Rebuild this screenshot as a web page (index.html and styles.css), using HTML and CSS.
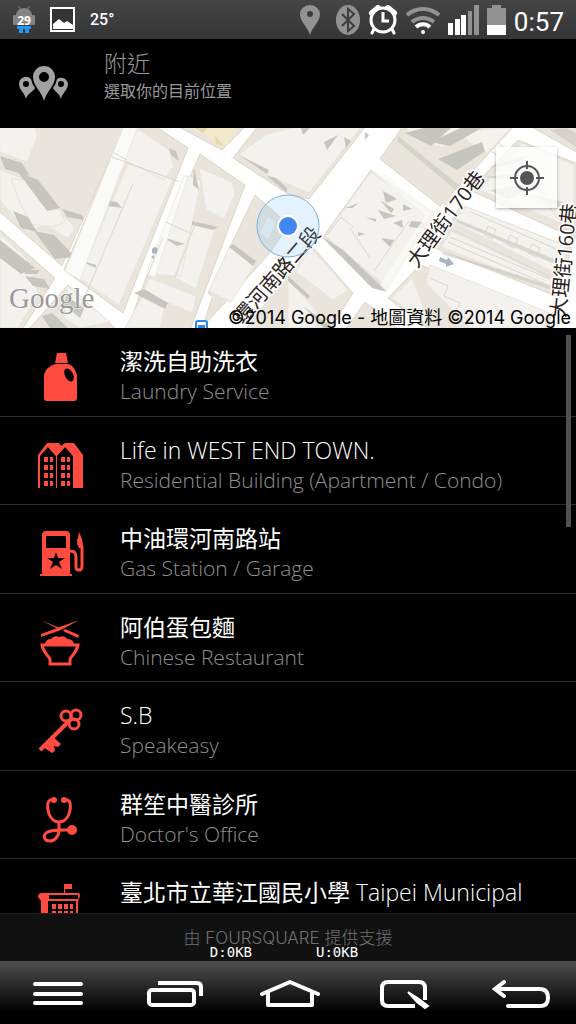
FILE: index.html
```html
<!DOCTYPE html>
<html lang="zh-TW">

<head>
    <meta charset="UTF-8">
    <meta name="viewport" content="width=device-width, initial-scale=1.0">
    <title>附近</title>
    <link rel="stylesheet" href="styles.css">
</head>

<body>
    <!-- 狀態列 -->
    <div class="status-bar">
        <div class="status-left">
            <svg width="24" height="28" viewBox="0 0 24 28">
                <path d="M4 9a8 7 0 0 1 16 0v10H4z" fill="#858585" />
                <path d="M6 0l3 4M18 0l-3 4" stroke="#858585" />
                <rect x="1" y="9" width="3" height="10" rx="1" fill="#858585" />
                <rect x="20" y="9" width="3" height="10" rx="1" fill="#858585" />
                <path d="M5 20h14v3h-2v4h-4v-4h-2v4H7v-4H5z" fill="#2196f3" />
                <text x="12" y="19" class="badge-text">29</text>
            </svg>
            <svg width="26" height="26" viewBox="0 0 26 26">
                <rect x="1" y="1" width="23" height="23" fill="#333" stroke="#fff" stroke-width="2" />
                <path d="M3 22v-5l6-5 5 4 3-2 6 4v4z" fill="#fff" />
            </svg>
            <span class="temperature">25°</span>
        </div>
        <div class="status-right">
            <svg width="20" height="32" viewBox="0 0 20 32">
                <path d="M10 31C8 23 0 18 0 10a10 9 0 0 1 20 0c0 8-8 13-10 21z" fill="#929292" />
                <circle cx="10" cy="10" r="3" fill="#3c3c3c" />
            </svg>
            <svg width="24" height="32" viewBox="0 0 24 32">
                <ellipse cx="12" cy="16" rx="12" ry="15" fill="#929292" />
                <path d="M6 10l12 12-6 5V5l6 5L6 22" fill="none" stroke="#3c3c3c" stroke-width="2" />
            </svg>
            <svg width="30" height="30" viewBox="0 0 30 30">
                <path d="M4 8l6-5M26 8l-6-5" stroke="#fff" stroke-width="6" stroke-linecap="round" />
                <path d="M6 24l-2 4M24 24l2 4" stroke="#fff" stroke-width="3" stroke-linecap="round" />
                <circle cx="15" cy="15" r="12" fill="#3c3c3c" stroke="#fff" stroke-width="3" />
                <path d="M15 7v9h6" fill="none" stroke="#fff" stroke-width="3" />
            </svg>
            <svg width="34" height="28" viewBox="0 0 34 28" fill="none" stroke-width="4">
                <path d="M1 9a24 24 0 0 1 32 0" stroke="#929292" />
                <path d="M6 16a17 17 0 0 1 22 0" stroke="#929292" />
                <path d="M10 21a10 10 0 0 1 14 0" stroke="#fff" />
                <circle cx="17" cy="26" r="2" fill="#fff" />
            </svg>
            <svg width="31" height="30" viewBox="0 0 31 30">
                <path d="M0 18h5v12H0zM7 14h5v16H7zM13 10h5v20h-5z" fill="#fff" />
                <path d="M20 6h4v24h-4zM26 0h5v30h-5z" fill="#929292" />
            </svg>
            <svg width="19" height="30" viewBox="0 0 19 30">
                <path d="M5 0h9v3h5v18H0V3h5z" fill="#929292" />
                <path d="M0 20h19v10H0z" fill="#fff" />
            </svg>
            <span class="clock">0:57</span>
        </div>
    </div>

    <!-- 標題 -->
    <header class="header">
        <svg class="header-icon" width="50" height="36" viewBox="0 0 50 36" fill="#a2a2a2" fill-rule="evenodd">
            <path d="M26 35C24 26 15 20 15 11a11 11 0 0 1 22 0c0 9-9 15-11 24zM26 6a5 5 0 0 0 0 10 5 5 0 0 0 0-10z" />
            <path d="M8 33C7 27 1 24 1 18a7 7 0 0 1 12-5q1 5 4 9c-1 3-8 6-9 11zM8 15a3 3 0 0 0 0 6 3 3 0 0 0 0-6z" />
            <path d="M43 33c1-6 7-9 7-15a7 7 0 0 0-11-5q-1 5-4 9c1 3 7 6 8 11zM43 15a3 3 0 0 0 0 6 3 3 0 0 0 0-6z" />
        </svg>
        <div>
            <h1 class="header-title">附近</h1>
            <p class="header-subtitle">選取你的目前位置</p>
        </div>
    </header>

    <!-- 地圖 -->
    <div class="map">
        <svg class="map-canvas" viewBox="0 0 576 200" preserveAspectRatio="xMidYMid slice">
            <rect width="576" height="200" fill="#fff" />
            <!-- 街區 -->
            <g fill="#e9e5dc" stroke="#ddd6c8">
                <path d="M-2-2H125L62 138 0 84zM-2 100L55 150 22 202H-2z" />
                <path d="M124-2H155L188 20 123 185 64 142zM68 157L117 202H28z" />
                <path d="M200 26L245 57 190 202H127L147 147z" />
                <path d="M255 67L289 97 268 127 223 177 208 165zM212 170l10 8-19 20z" />
                <path d="M177-2H246L222 22zM258-2H366L309 71 288 66 233 30z" />
                <path d="M371 42L434 85 386 162 323 109z" />
                <path d="M403-2H514L460 57 440 78 380 31zM530-2H578V25z" />
                <path d="M518 12L578 36V112L470 62zM461 77L572 120 556 168 435 120z" />
                <path d="M420 137L552 186 548 202H430L388 170z" />
                <path d="M311 117L353 165 330 202H245zM365 174L400 202H345z" />
            </g>
            <!-- 建築 -->
            <g fill="#f3f2ee" stroke="#e8e5df">
                <path d="M-2-2H35L37 10 27 34 0 24zM0 42L20 49 42 83 65 89 75 100 68 110 45 97 28 104 0 72zM0 106L26 130 38 166 18 200H0z" />
                <path d="M11 51l14 1 22 28 13 2 5 12-12 5-21-3-11-19zM68 158l42 36-30 6-16-10z" />
                <path d="M139 2l30 20 5 16-10 14-52-26zM128 36l45 15-54 126-40-27z" />
                <path d="M199 40l33 14 3 12-11 25-18-9zM188 48l13 5-20 95-34-2zM194 94l21 7-19 60-22-12z" />
                <path d="M149 150l47 18-3 17-50-20zM145 164l20 13-5 23h-35zM230 118l25 19-24 37-22-11zM268 88l8 8-8 16-8-8z" />
                <path d="M267 6L302-2H362L309 65 270 48 239 26zM371 44l59 42-43 73-62-51z" />
                <path d="M404-2H470L442 19 415 12zM459 3L511 0 487 25 470 15zM522 15L574 37V100L480 62z" />
                <path d="M467 79L568 119 558 146 453 94zM451 103L556 153 554 162 441 119z" />
                <path d="M430 137L550 185 544 200H470L426 155zM412 150l20 50-40-30zM310 119l38 43-15 10-37-28zM288 152l28 30v18h-28z" />
            </g>
            <!-- 建築陰影 -->
            <g fill="#c7c5bf">
                <path d="M0 28L22 35 30 48 5 41zM18 44L38 52 60 80 47 83zM13 83l15 6 9 15-16-4zM34 103l20 4 21 22-20 2z" />
                <path d="M62 81l20 6 2 5-17-3zM0 112l35 28-14 6L0 130zM25 148l19 3 6 10-17-3zM25 142h15l-3 4H25z" />
                <path d="M42 188l10-3 16 15H50zM66 168l18 12-4 10-16-13zM134 165l10-4 24 14-3 6z" />
                <path d="M99 71l18 3 5 6-20-3zM71 129l25 8v3zM169 20l7 3 3 10-8-6zM192 93l26 6-5 3-21-5zM163 109l22 7-8 2z" />
                <path d="M233 116l23 17-3 5-24-19zM194 40l5 22-6-5zM276 50l11 10v5l-20-17zM239 27l30 15-2 4z" />
                <path d="M301 0h9l-7 7zM324 14l14-7-11 15zM344 9l7 4-5 7zM365 4l4 3-4 5zM405 5L431-2h22l-22 20zM431 14L465-2h20l-35 20zM438 31l44-17 3 9-28 19z" />
                <path d="M345 80l14-5-7 5zM383 63l14 8-11 4zM380 72l14 9-3 4zM403 76l9 5-9 2zM358 104l8 2-8 2zM378 82l18 6-12 3zM393 95l9-3 1 8zM411 93l12 1 3 7-17-2zM381 110l13 2-4 7zM366 89l10 2v3z" />
                <path d="M322 109l20 12 45 43-15-4zM288 148l22 20-2 3-20-18zM303 178l30 22h-9z" />
                <path d="M486 40l42-13-9 8zM484 49l38-4-12 7zM490 62l49-7-31 17zM530 67l34 7-5 5zM550 2l16-2 12 6V20z" opacity=".6" />
                <path d="M443 124l110 34v4l-111-36zM454 90l110 45v5L458 95z" opacity=".6" />
            </g>
            <path d="M124-2H138L80 152 65 143zM188 48l-4 0-38 98 9 3z" fill="#fafaf8" stroke="#eceae4" />
            <path d="M371 42L386 47 434 85 428 95 388 164 380 157 426 87z" fill="#fafaf6" opacity=".8" />
            <path d="M398 24l58 46-9 9-60-45z" fill="#e9e5dc" />
            <path d="M398 8l62 50-4 4-58-48z" fill="#d2d4c8" />
            <g fill="none" stroke="#dad7d0">
                <path d="M112 29l68 25M114 25l13 7M133 56L80 180M196 94L175 150M166 94l26 12M163 109l-16 40" />
                <path d="M453 102l100 48M450 109l100 42M448 114l98 42M471 84l92 40-9 11M488 20l60 50M499 15l71 90M505 58l71 31" />
                <path d="M430 150l18 8-4 10 16 7-5 10 18 9M327 107l14-18 12 10M409 93l-35 50M350 100l20 30M488 98l8 4-4 9-8-4zM510 107l8 4-4 9-8-4zM532 116l8 4-4 9-8-4z" />
            </g>
            <path d="M195 0h42l-4 8-9 12-12-8z" fill="#f2e8ca" />
            <path d="M195 0l8 5 5-5M215 8l9 10-8-2z" fill="#e4d7ab" />
            <path d="M152 121q3-4 6 0l-2 5-4-1zM151 129l3-2v4zM440 129l7 3 1-3 6 7-8 3v-3l-7-3z" fill="#a9b4c2" />
            <rect x="196" y="193" width="11" height="11" rx="2" fill="#fff" stroke="#2b86ea" stroke-width="2" />
            <path d="M198 197h7v4h-7z" fill="#2b86ea" />
            <!-- 路名 -->
            <g class="street">
                <text transform="translate(243 197) rotate(-49)">環河南路二段</text>
                <text transform="translate(417 141) rotate(-53)">大理街170巷</text>
                <text transform="translate(565 190) rotate(-84)">大理街160巷</text>
            </g>
            <!-- 目前位置 -->
            <circle cx="288" cy="98" r="31" fill="#64b5f0" fill-opacity=".18" stroke="#7fb2dc" />
            <circle cx="288" cy="98" r="11" fill="#fff" />
            <circle cx="288" cy="98" r="9" fill="#4285f4" />
            <text x="9" y="180" class="watermark">Google</text>
        </svg>
        <button class="locate" type="button" aria-label="目前位置">
            <svg width="36" height="36" viewBox="0 0 36 36" fill="none" stroke="#555" stroke-width="2">
                <circle cx="18" cy="18" r="12" />
                <path d="M18 1v8M18 27v8M1 18h8M27 18h8" />
                <circle cx="18" cy="18" r="6" fill="#555" />
            </svg>
        </button>
        <div class="copyright">©2014 Google - 地圖資料 ©2014 Google</div>
    </div>

    <!-- 地點列表 -->
    <main class="places">
        <ul class="place-list">
            <li>
                <a class="place" href="#">
                    <svg class="place-icon" viewBox="0 0 48 48">
                        <path d="M19 0h9l2 10H17zM15 12q2-1 4-1h10q3 0 5 2c3 3 5 7 5 11v21q0 3-3 3H9q-3 0-3-3V24c0-6 4-10 9-12z" />
                        <ellipse cx="31" cy="22" rx="4" ry="7" transform="rotate(-28 31 22)" fill="#000" />
                    </svg>
                    <span class="place-text"><span class="place-name"><span class="cjk">潔洗自助洗衣</span></span><span class="place-type">Laundry Service</span></span>
                </a>
            </li>
            <li>
                <a class="place" href="#">
                    <svg class="place-icon" viewBox="1 0 48 48">
                        <path d="M1 46V13L10 1h10l4 3 4-3h9l9 12v33H36V14l-8-9-8 9v32h-1V14L11 5 3 14v32z" />
                        <path d="M10 1h12l3 4h3l-9 9-8-9zM7 15h4v5H7zM13 15h3v5h-3zM7 23h4v5H7zM13 23h3v5h-3zM7 31h4v5H7zM13 31h3v5h-3zM7 39h4v5H7zM13 39h3v5h-3zM24 15h4v5h-4zM30 15h3v5h-3zM24 23h4v5h-4zM30 23h3v5h-3zM24 31h4v5h-4zM30 31h3v5h-3zM24 39h4v5h-4zM30 39h3v5h-3z" />
                    </svg>
                    <span class="place-text"><span class="place-name">Life in WEST END TOWN.</span><span class="place-type">Residential Building (Apartment / Condo)</span></span>
                </a>
            </li>
            <li>
                <a class="place" href="#">
                    <svg class="place-icon" viewBox="0 0 48 48">
                        <path fill-rule="evenodd" d="M4 44V5q0-4 4-4h20q4 0 4 4v39h2v2H2v-2zM8 6v12h20V6zM18 22l-2 6h-7l6 4-3 7 6-4 6 4-3-7 6-4h-7z" />
                        <path d="M32 21c5 0 6 2 6 8v8q0 3 3 3t3-4V17l-4-8" fill="none" stroke="#ff4b40" stroke-width="3" />
                        <path d="M41 2q4 7 4 16h-4l-2-4z" />
                    </svg>
                    <span class="place-text"><span class="place-name"><span class="cjk">中油環河南路站</span></span><span class="place-type">Gas Station / Garage</span></span>
                </a>
            </li>
            <li>
                <a class="place" href="#">
                    <svg class="place-icon" viewBox="0 0 48 48">
                        <path d="M3 15L41 1 23 11 3 18zM3 1l21 9-2 1zM27 10l14 6-1 3-15-7zM7 25q1-5 6-5 3-4 8-2 6-2 8 2 6 0 7 5z" />
                        <path d="M4 26h36c-1 7-5 9-8 14v5H12v-5C9 35 5 33 4 26z" fill="none" stroke="#ff4b40" stroke-width="3" />
                    </svg>
                    <span class="place-text"><span class="place-name"><span class="cjk">阿伯蛋包麵</span></span><span class="place-type">Chinese Restaurant</span></span>
                </a>
            </li>
            <li>
                <a class="place" href="#">
                    <svg class="place-icon" viewBox="0 0 48 48">
                        <g fill="none" stroke="#ff4b40" stroke-width="3">
                            <circle cx="28" cy="9" r="5" />
                            <circle cx="38" cy="8" r="5" />
                            <circle cx="36" cy="17" r="5" />
                            <path d="M31 14L2 43" stroke-width="4" />
                        </g>
                        <path d="M14 29l9 8-3 3-4-1 1 5-3 2-9-6z" />
                    </svg>
                    <span class="place-text"><span class="place-name">S.B</span><span class="place-type">Speakeasy</span></span>
                </a>
            </li>
            <li>
                <a class="place" href="#">
                    <svg class="place-icon" viewBox="0 0 48 48">
                        <g fill="none" stroke="#ff4b40" stroke-width="3" stroke-linecap="round">
                            <path d="M16 4c-8-2-7 8-5 14 2 5 5 8 10 8s8-3 10-8c2-6 3-16-5-14" />
                            <path d="M21 26v8c0 7-5 11-9 11-6 0-7-5-4-8 5-4 16-3 26-3" />
                        </g>
                        <circle cx="16" cy="4" r="3" />
                        <circle cx="26" cy="4" r="3" />
                        <circle cx="34" cy="34" r="5" />
                    </svg>
                    <span class="place-text"><span class="place-name"><span class="cjk">群笙中醫診所</span></span><span class="place-type">Doctor's Office</span></span>
                </a>
            </li>
            <li>
                <a class="place" href="#">
                    <svg class="place-icon" viewBox="0 0 48 48">
                        <path d="M26 0h8v5h-7v4h-1z" />
                        <path fill-rule="evenodd" d="M4 9h36q2 0 2 3l-2 5v30H3V17l-3-4q0-4 4-4zM11 11v4h29v-4zM10 17v30h28V17z" />
                        <path d="M14 20h4v5h-4zM20 20h4v5h-4zM26 20h4v5h-4zM32 20h3v5h-3zM14 27h4v5h-4zM20 27h4v5h-4zM26 27h4v5h-4zM32 27h3v5h-3z" />
                    </svg>
                    <span class="place-text"><span class="place-name"><span class="cjk">臺北市立華江國民小學</span> Taipei Municipal</span></span>
                </a>
            </li>
        </ul>
        <div class="scrollbar"></div>
    </main>

    <!-- 頁尾 -->
    <footer class="footer">
        <span>由 FOURSQUARE 提供支援</span>
        <div class="traffic"><span>D:0KB</span><span>U:0KB</span></div>
    </footer>

    <!-- 導覽列 -->
    <nav class="nav-bar">
        <button type="button" aria-label="選單">
            <svg width="60" height="36" viewBox="0 0 60 36"><path d="M7 9h46M7 19h46M7 28h46" /></svg>
        </button>
        <button type="button" aria-label="最近使用">
            <svg width="60" height="36" viewBox="0 0 60 36">
                <rect x="5" y="15" width="45" height="15" rx="3" />
                <path d="M14 8h39q4 0 4 4v9" stroke-linecap="butt" />
            </svg>
        </button>
        <button type="button" aria-label="首頁">
            <svg width="60" height="36" viewBox="0 0 60 36"><path d="M2 19L30 7l28 12M8 18v12h44V18" stroke-linejoin="round" /></svg>
        </button>
        <button type="button" aria-label="快速備忘">
            <svg width="60" height="36" viewBox="0 0 60 36">
                <path d="M40 31H13q-6 0-6-6V13q0-6 6-6h31q6 0 6 6v12" stroke-linecap="butt" />
                <path d="M33 17l11 7 9 7-3 2-8-6z" stroke-width="2" fill="#fff" />
            </svg>
        </button>
        <button type="button" aria-label="返回">
            <svg width="60" height="36" viewBox="0 0 60 36"><path d="M4 14h45q8 0 8 9 0 8-8 8H17M13 7L4 14l9 7" /></svg>
        </button>
    </nav>
</body>

</html>
```
FILE: styles.css
```css
/* 全局樣式 */
* {
    box-sizing: border-box;
}

body {
    margin: 0;
    height: 100vh;
    display: flex;
    flex-direction: column;
    background-color: #000;
    color: #fff;
    font-family: "Open Sans", "Noto Sans CJK TC", sans-serif;
    font-weight: 300;
}

svg {
    display: block;
    flex: none;
}

button {
    border: none;
    padding: 0;
    background: none;
    cursor: pointer;
}

.cjk {
    font-weight: 400;
}

/* 狀態列 */
.status-bar {
    height: 39px;
    flex: none;
    display: flex;
    justify-content: space-between;
    align-items: center;
    padding: 0 12px;
    background: linear-gradient(#454545, #353535);
}

.status-left,
.status-right {
    display: flex;
    align-items: center;
}

.status-left {
    gap: 14px;
}

.status-right {
    gap: 8px;
}

.status-right svg:first-child {
    margin-right: 8px;
}

.badge-text {
    font: bold 12px "Open Sans", sans-serif;
    fill: #fff;
    text-anchor: middle;
}

.temperature {
    font: 500 16px "Roboto", sans-serif;
}

.clock {
    font: 26px "Roboto", sans-serif;
    padding-top: 4px;
}

/* 標題 */
.header {
    height: 89px;
    flex: none;
    display: flex;
    gap: 36px;
    padding: 8px 18px;
    color: #999;
}

.header-icon {
    margin-top: 19px;
}

.header-title {
    margin: 0;
    font-size: 23px;
    line-height: 32px;
    font-weight: 300;
}

.header-subtitle {
    margin: 0;
    font-size: 16px;
    line-height: 24px;
    font-weight: 400;
}

/* 地圖 */
.map {
    position: relative;
    height: 200px;
    flex: none;
    overflow: hidden;
}

.map-canvas {
    width: 100%;
    height: 100%;
}

.street {
    font: 20px "Open Sans", "Noto Sans CJK TC", sans-serif;
    fill: #2b2320;
    stroke: #fff;
    stroke-width: 3px;
    paint-order: stroke;
}

.watermark {
    font: 29px "Liberation Serif", serif;
    fill: #999;
    stroke: #fff;
    stroke-width: 1px;
    paint-order: stroke;
}

.locate {
    position: absolute;
    top: 19px;
    right: 19px;
    width: 61px;
    height: 61px;
    display: flex;
    align-items: center;
    justify-content: center;
    background-color: rgba(255, 255, 255, 0.75);
    box-shadow: 0 1px 3px rgba(0, 0, 0, 0.3);
}

.copyright {
    position: absolute;
    right: 5px;
    bottom: 0;
    color: #000;
    font-family: "Inter", "Noto Sans CJK TC", sans-serif;
    font-size: 18px;
    font-weight: 400;
    line-height: 20px;
    white-space: nowrap;
}

/* 地點列表 */
.places {
    position: relative;
    flex: 1;
    min-height: 0;
    overflow: hidden;
}

.place-list {
    height: 620px;
    margin: 0;
    padding: 0;
    list-style: none;
    display: grid;
    grid-auto-rows: 1fr;
}

.place {
    height: 100%;
    display: flex;
    gap: 34px;
    padding: 17px 24px 0 38px;
    border-bottom: 1px solid #2b2b2b;
    color: #fff;
    text-decoration: none;
    white-space: nowrap;
}

.place-icon {
    width: 48px;
    height: 48px;
    margin-top: 8px;
    fill: #ff4b40;
}

.place-name,
.place-type {
    display: block;
}

.place-name {
    font-size: 23px;
    line-height: 32px;
}

.place-type {
    color: #909090;
    font-size: 21px;
    line-height: 28px;
}

.scrollbar {
    position: absolute;
    top: 7px;
    right: 5px;
    width: 5px;
    height: 192px;
    background-color: #505050;
}

/* 頁尾 */
.footer {
    position: relative;
    height: 48px;
    flex: none;
    border-top: 1px solid #222;
    background-color: #111;
    color: #707070;
    font-family: "Inter", "Noto Sans CJK TC", sans-serif;
    font-size: 17px;
    line-height: 48px;
    text-align: center;
}

.traffic {
    position: absolute;
    right: 0;
    bottom: 0;
    left: 0;
    display: flex;
    justify-content: center;
    gap: 64px;
    padding-right: 8px;
    color: #fff;
    font: 14px/18px "DejaVu Sans Mono", monospace;
}

/* 導覽列 */
.nav-bar {
    height: 63px;
    flex: none;
    display: flex;
    justify-content: space-between;
    align-items: center;
    padding: 0 25px 0 28px;
    background: linear-gradient(#505050, #000 80%);
}

.nav-bar svg {
    fill: none;
    stroke: #fff;
    stroke-width: 4;
    stroke-linecap: round;
}
```
